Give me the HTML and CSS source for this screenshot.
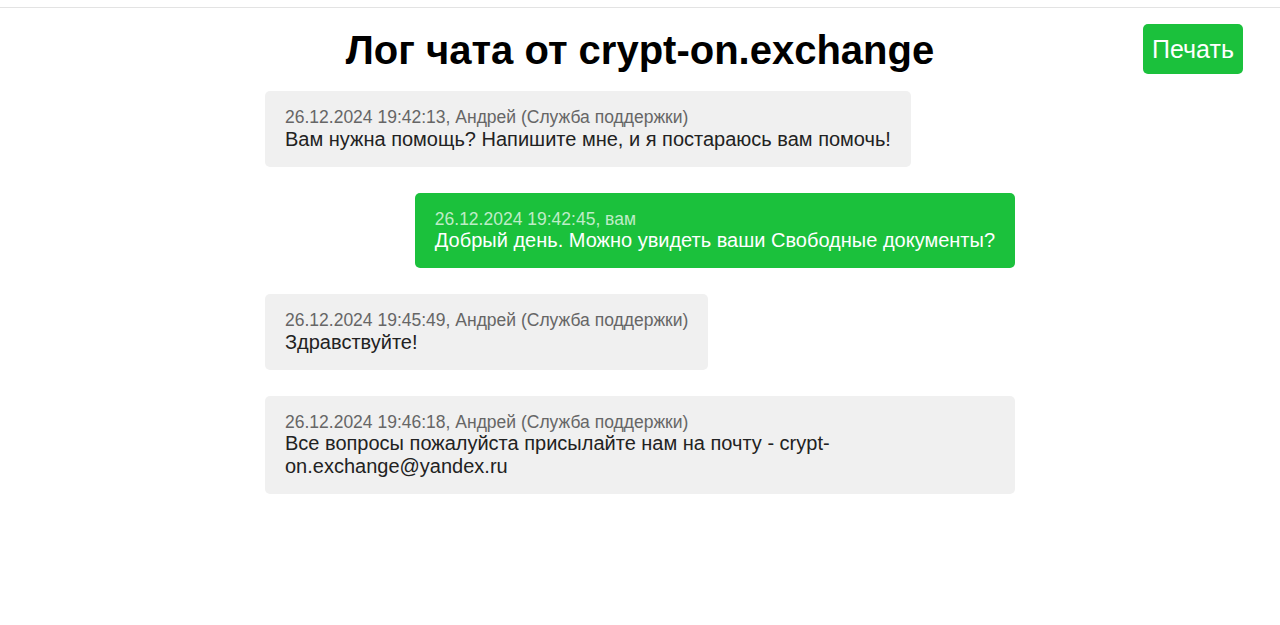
FILE: index.html
```html
<!DOCTYPE html>
<html lang="ru">
<head>
<meta charset="utf-8">
<title>Лог чата</title>
<link rel="stylesheet" href="styles.css">
</head>
<body>
<div class="rule"></div>
<header class="header">
  <div></div>
  <h1 class="title">Лог чата от crypt-on.exchange</h1>
  <div class="actions"><button class="print">Печать</button></div>
</header>
<main class="chat">
  <div class="msg msg-in">
    <div class="meta">26.12.2024 19:42:13, Андрей (Служба поддержки)</div>
    <div class="text">Вам нужна помощь? Напишите мне, и я постараюсь вам помочь!</div>
  </div>
  <div class="msg msg-out">
    <div class="meta">26.12.2024 19:42:45, вам</div>
    <div class="text">Добрый день. Можно увидеть ваши Свободные документы?</div>
  </div>
  <div class="msg msg-in">
    <div class="meta">26.12.2024 19:45:49, Андрей (Служба поддержки)</div>
    <div class="text">Здравствуйте!</div>
  </div>
  <div class="msg msg-in">
    <div class="meta">26.12.2024 19:46:18, Андрей (Служба поддержки)</div>
    <div class="text">Все вопросы пожалуйста присылайте нам на почту - crypt-on.exchange@yandex.ru</div>
  </div>
</main>
</body>
</html>
```
FILE: styles.css
```css
* { box-sizing: border-box; }
body {
  margin: 0;
  font-family: "Liberation Sans", Arial, sans-serif;
  background: #fff;
  color: #222;
}
.rule {
  height: 8px;
  border-bottom: 1px solid #e3e3e3;
}
.header {
  display: grid;
  grid-template-columns: 1fr auto 1fr;
  align-items: center;
  padding: 16px 37px 15px;
}
.title {
  margin: 0;
  font-size: 40px;
  font-weight: bold;
  color: #000;
  line-height: 46px;
  position: relative;
  top: 1px;
}
.actions {
  display: flex;
  justify-content: flex-end;
}
.print {
  height: 50px;
  width: 100px;
  border: none;
  border-radius: 5px;
  background: #1bc13c;
  color: #fff;
  font-family: "Liberation Sans", Arial, sans-serif;
  font-size: 25px;
  padding: 0;
}
.chat {
  width: 750px;
  margin: 2px auto 0;
  display: flex;
  flex-direction: column;
  gap: 26px;
}
.msg {
  max-width: 100%;
  padding: 16px 20px;
  border-radius: 5px;
}
.msg-in {
  align-self: flex-start;
  background: #f0f0f0;
}
.msg-out {
  align-self: flex-end;
  background: #1bc13c;
  color: #fff;
}
.meta {
  font-size: 17.5px;
  line-height: 20.5px;
  color: #666;
}
.msg-out .meta {
  color: rgba(255,255,255,0.72);
}
.text {
  font-size: 20px;
  line-height: 23px;
}
```
